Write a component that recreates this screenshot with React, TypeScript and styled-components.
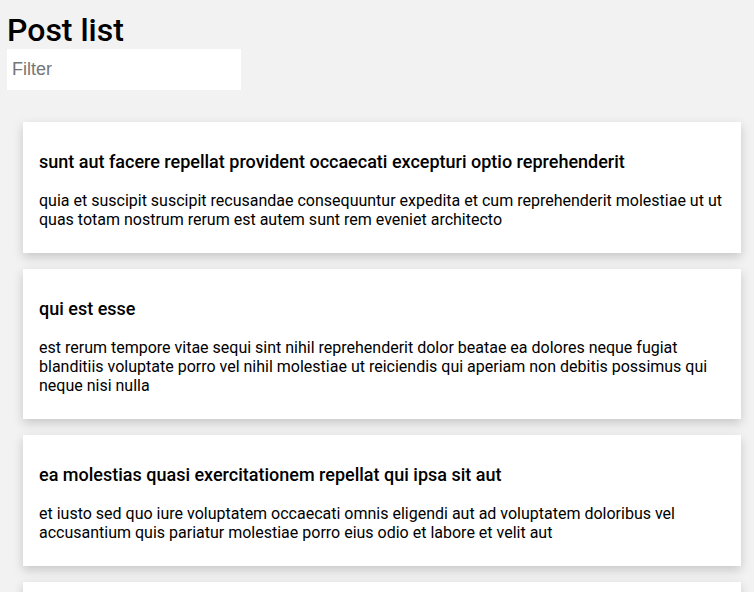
import React from 'react'
import styled, { createGlobalStyle } from 'styled-components'

const GlobalStyle = createGlobalStyle`
	body {
		margin: 0;
		background-color: #f2f2f2;
		font-family: Roboto, "Noto Sans", sans-serif;
		color: #000;
	}
`

const Page = styled.div`
	padding: 0 7px;
`

const Header = styled.div`
	display: flex;
	flex-direction: column;
	align-items: flex-start;
`

const Title = styled.h1`
	margin: 12px 0 0;
	font-size: 32px;
	font-weight: 500;
	line-height: 37px;
`

const FilterInput = styled.input`
	width: 234px;
	height: 41px;
	box-sizing: border-box;
	border: none;
	outline: none;
	padding: 0 5px;
	background: #fff;
	font-family: "Liberation Sans", Arial, sans-serif;
	font-size: 18px;

	&::placeholder {
		color: #757575;
	}
`

const List = styled.div`
	display: flex;
	flex-direction: column;
	gap: 16px;
	padding: 32px 6px 0 16px;
`

const Card = styled.div`
	background: #fff;
	padding: 29px 16px 24px;
	box-shadow: 0 4px 10px rgba(0, 0, 0, 0.18);
`

const CardTitle = styled.h3`
	margin: 0 0 19px;
	font-size: 18px;
	font-weight: 500;
	line-height: 21px;
`

const CardBody = styled.p`
	margin: 0;
	font-size: 16px;
	line-height: normal;
`

type Post = { title: string, body: string }

const posts: Post[] = [
	{
		title: 'sunt aut facere repellat provident occaecati excepturi optio reprehenderit',
		body: 'quia et suscipit suscipit recusandae consequuntur expedita et cum reprehenderit molestiae ut ut quas totam nostrum rerum est autem sunt rem eveniet architecto',
	},
	{
		title: 'qui est esse',
		body: 'est rerum tempore vitae sequi sint nihil reprehenderit dolor beatae ea dolores neque fugiat blanditiis voluptate porro vel nihil molestiae ut reiciendis qui aperiam non debitis possimus qui neque nisi nulla',
	},
	{
		title: 'ea molestias quasi exercitationem repellat qui ipsa sit aut',
		body: 'et iusto sed quo iure voluptatem occaecati omnis eligendi aut ad voluptatem doloribus vel accusantium quis pariatur molestiae porro eius odio et labore et velit aut',
	},
	{
		title: 'eum et est occaecati',
		body: 'ullam et saepe reiciendis voluptatem adipisci sit amet autem assumenda provident rerum culpa quis hic commodi nesciunt rem tenetur doloremque ipsam iure quis sunt voluptatem rerum illo velit',
	},
]

export default function App() {
	return <Page>
		<GlobalStyle />
		<Header>
			<Title>Post list</Title>
			<FilterInput placeholder={'Filter'} />
		</Header>
		<List>
			{posts.map((post, i) => <Card key={i}>
				<CardTitle>{post.title}</CardTitle>
				<CardBody>{post.body}</CardBody>
			</Card>)}
		</List>
	</Page>
}
